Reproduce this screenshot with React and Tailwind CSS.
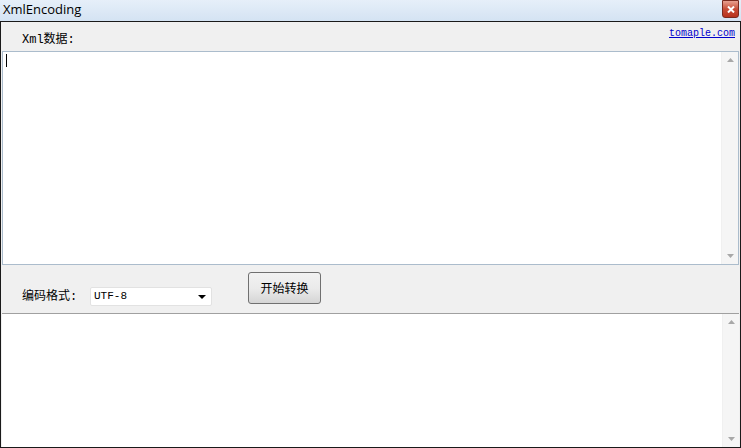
import React from 'react'

const cjk = { fontFamily: '"Liberation Mono", "Noto Sans CJK SC", monospace' }

function ScrollBar() {
    return (
        <div className="w-[17px] h-full bg-[#f5f5f5] flex flex-col items-center justify-between py-[6px] border-l border-[#f0f0f0]">
            <svg width="7" height="4" viewBox="0 0 7 4"><path d="M0 4 L3.5 0 L7 4 Z" fill="#a8a8a8" /></svg>
            <svg width="7" height="4" viewBox="0 0 7 4"><path d="M0 0 L3.5 4 L7 0 Z" fill="#a8a8a8" /></svg>
        </div>
    )
}

export default function App() {
    return (
        <div className="w-[741px] h-[448px] flex flex-col bg-[#dbe8f5] overflow-hidden">
            {/* Title bar */}
            <div className="h-[21px] flex items-start justify-between bg-gradient-to-b from-[#e6eff9] to-[#d4e3f3]">
                <span className="pl-[3px] pt-[1px] text-[13px] leading-[16px] text-black" style={{ fontFamily: '"Open Sans", "Liberation Sans", sans-serif' }}>XmlEncoding</span>
                <div className="mr-[2px] w-[17px] h-[18px] rounded-b-[3px] bg-gradient-to-b from-[#e8a090] via-[#c74d37] to-[#b8321c] border border-[#7a2a1e] flex items-center justify-center">
                    <svg width="8" height="7" viewBox="0 0 8 7"><path d="M1 0.5 L7 6.5 M7 0.5 L1 6.5" stroke="#fff" strokeWidth="2" /></svg>
                </div>
            </div>

            {/* Client area */}
            <div className="flex-1 flex flex-col bg-[#f0f0f0] border border-[#1a1a1a]" style={cjk}>
                <div className="h-[29px] flex items-start justify-between">
                    <span className="pl-[21px] pt-[11px] text-[12px] leading-[14px] text-black">Xml数据:</span>
                    <a className="mr-[5px] mt-[5px] whitespace-nowrap text-[10px] leading-[13px] text-[#0000cc] underline">tomaple.com</a>
                </div>

                <div className="mx-[1px] h-[214px] flex bg-white border border-[#abbccc]">
                    <div className="flex-1 pt-[2px] pl-[3px]">
                        <div className="w-[1px] h-[13px] bg-black" />
                    </div>
                    <ScrollBar />
                </div>

                <div className="h-[48px] flex items-start">
                    <span className="pl-[21px] pt-[25px] w-[89px] text-[12px] leading-[14px] text-black">编码格式:</span>
                    <div className="mt-[22px] w-[122px] h-[19px] bg-white border border-[#e2e2e2] rounded-[2px] flex items-center justify-between px-[3px]">
                        <span className="text-[11px] leading-[13px] text-black">UTF-8</span>
                        <svg width="8" height="4" viewBox="0 0 8 4" className="mr-[2px]"><path d="M0 0 L4 4 L8 0 Z" fill="#000" /></svg>
                    </div>
                    <button className="ml-[36px] mt-[7px] w-[73px] h-[32px] rounded-[3px] border border-[#707070] bg-gradient-to-b from-[#f2f2f2] via-[#ebebeb] to-[#d5d5d5] text-[12px] text-black flex items-center justify-center" style={{ fontFamily: '"Noto Sans CJK SC", sans-serif' }}>开始转换</button>
                </div>

                <div className="mx-[1px] flex-1 flex bg-white border-t border-[#a0a0a0]">
                    <div className="flex-1" />
                    <ScrollBar />
                </div>
            </div>
        </div>
    )
}
